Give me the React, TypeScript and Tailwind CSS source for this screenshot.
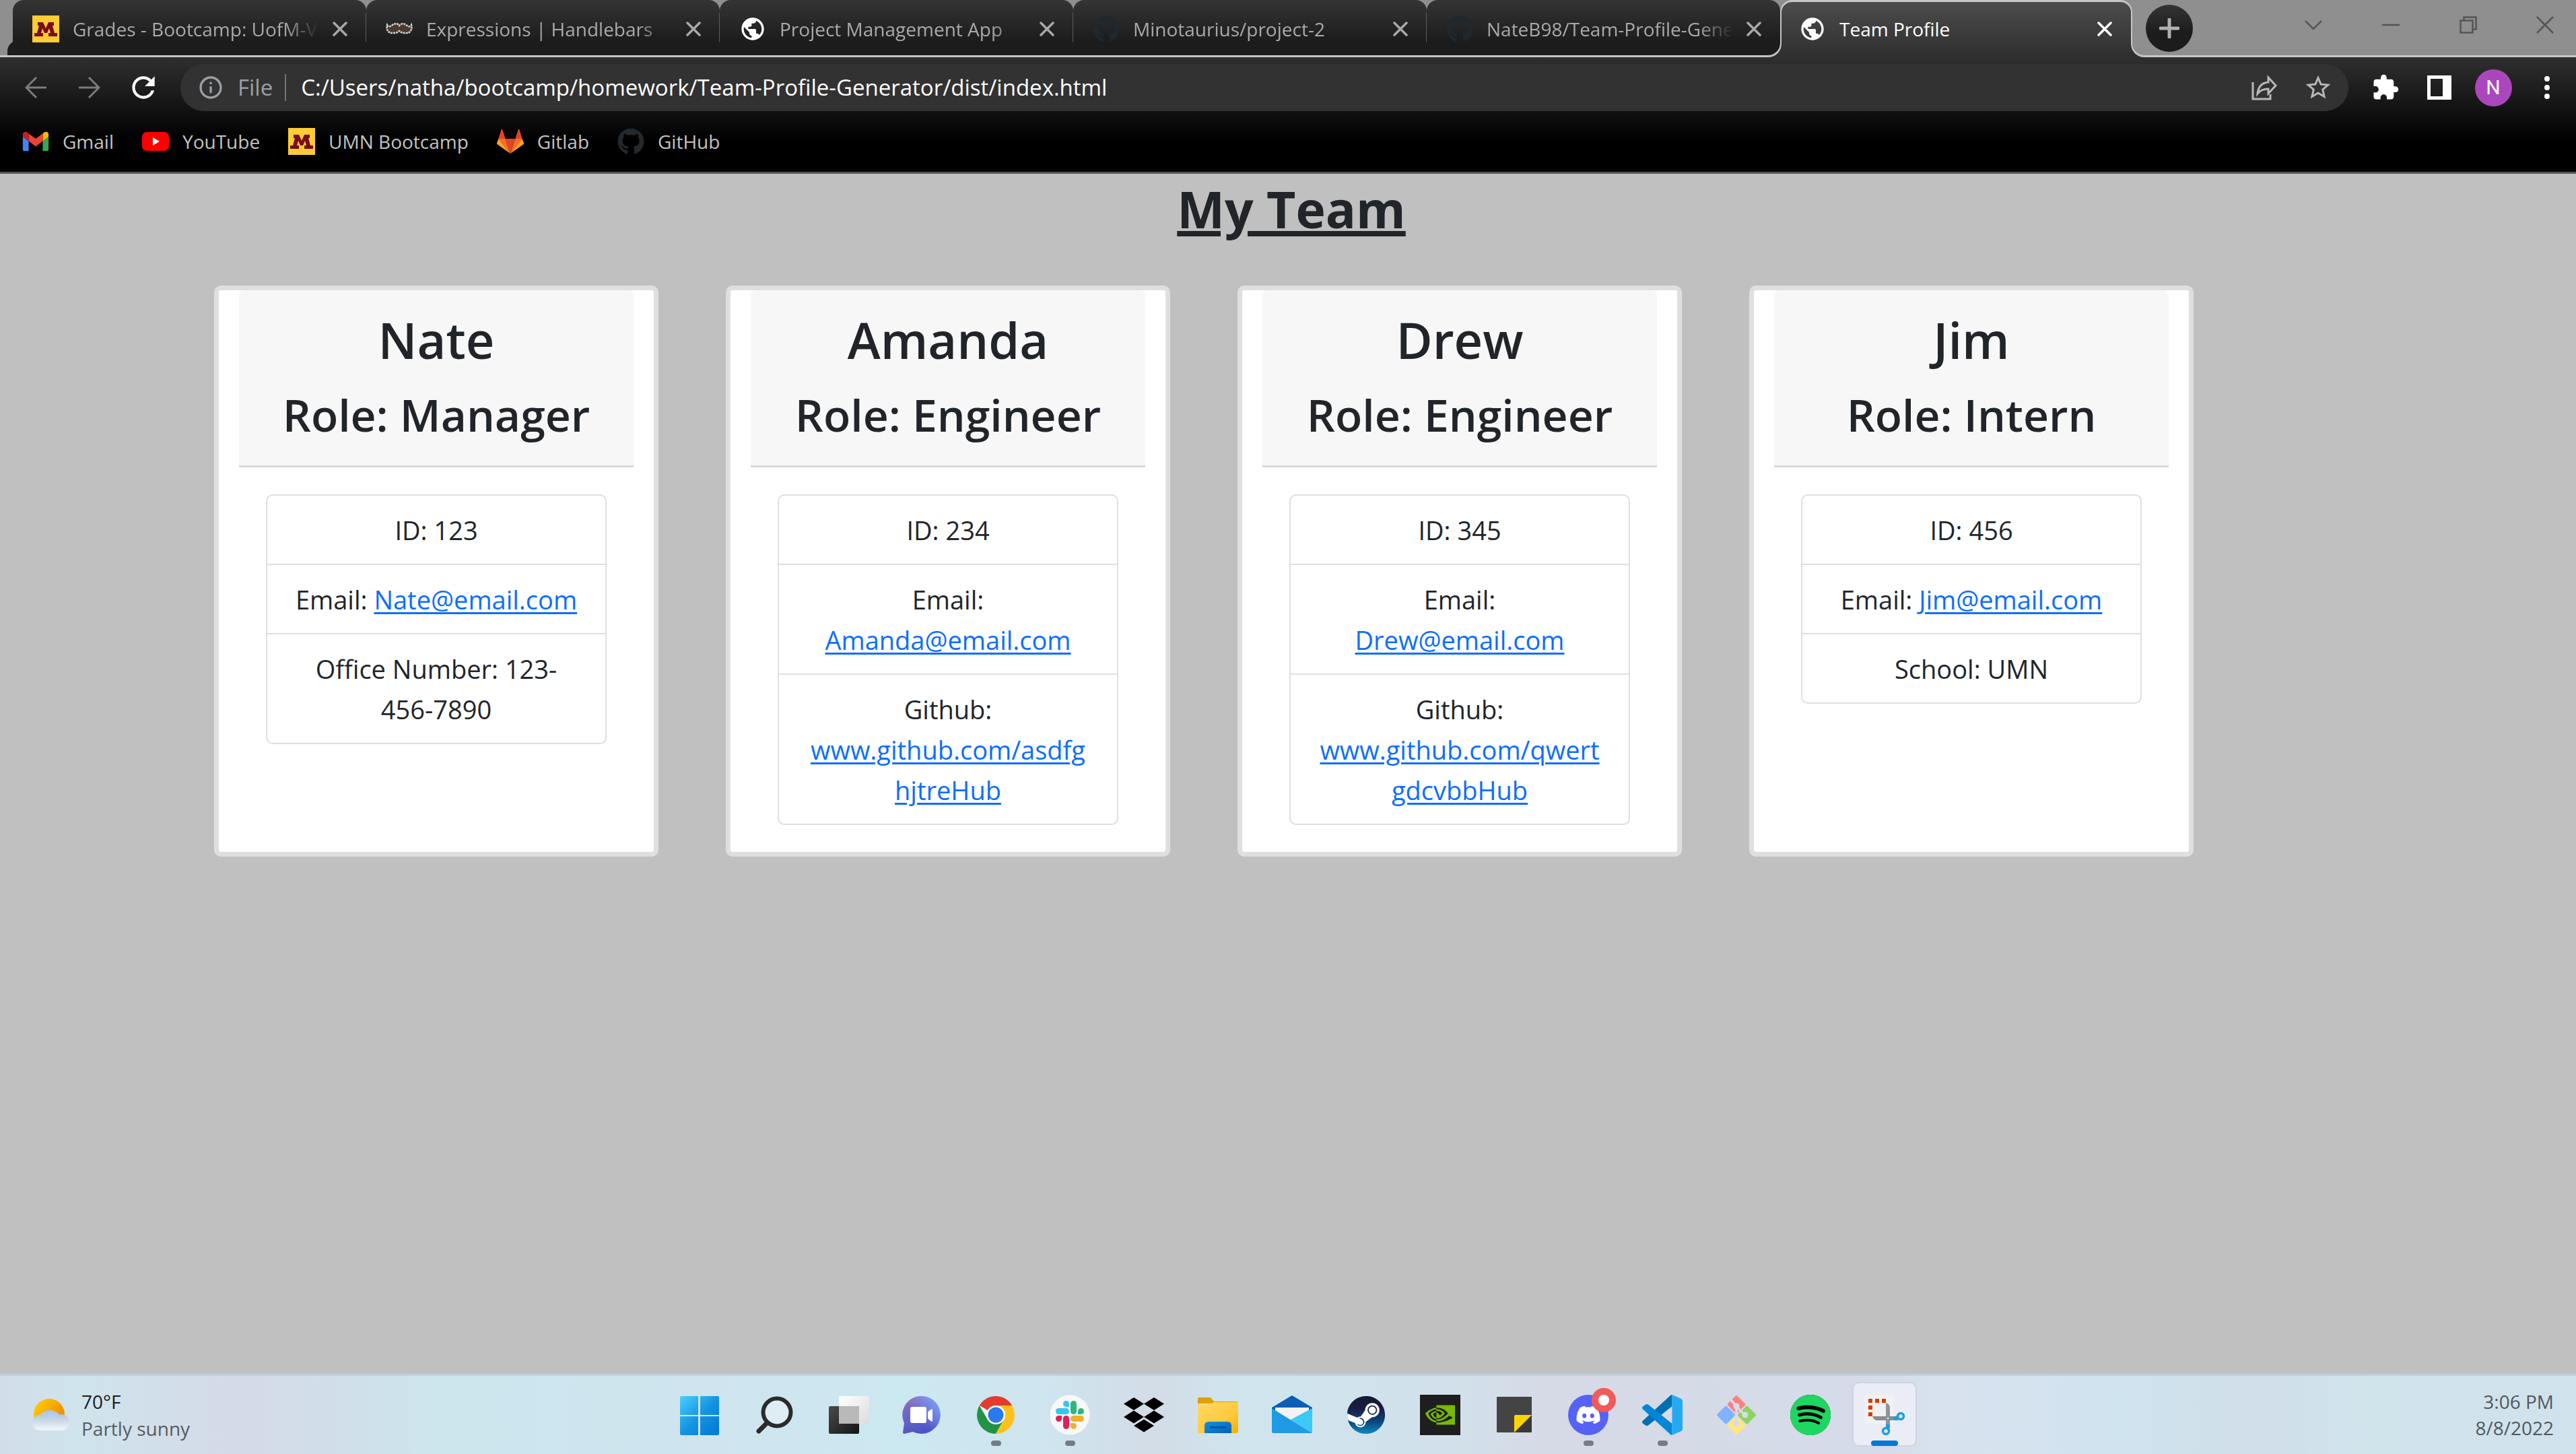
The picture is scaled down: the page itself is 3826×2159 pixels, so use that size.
import type { ReactNode } from 'react';
import { FaDiscord, FaGithub, FaSpotify, FaSteam } from 'react-icons/fa';
import { MdExtension, MdInfoOutline, MdPublic, MdRefresh, MdStarBorder } from 'react-icons/md';
import { SiNvidia } from 'react-icons/si';

/* ---------- small icons used in the browser chrome ---------- */

function MinnesotaIcon() {
  return (
    <svg viewBox="0 0 40 40" className="size-10 shrink-0" aria-hidden="true">
      <rect width="40" height="40" fill="#ffcc33" />
      <path
        d="M8 10h8l4 9 4-9h8v5h-2l3 11h4v5H24v-5h3l-2-7-3 7h-4l-3-7-2 7h3v5H3v-5h4l3-11H8z"
        fill="#7a0c1c"
      />
    </svg>
  );
}

function MoustacheIcon() {
  return (
    <svg viewBox="0 0 40 40" className="size-10 shrink-0" aria-hidden="true">
      <path
        d="M2 14c2 4 5 2 8 0 4-3 8-2 10 1 2-3 6-4 10-1 3 2 6 4 8 0 2 7-2 13-9 12-4 0-7-1-9-3-2 2-5 3-9 3-7 1-11-5-9-12z"
        fill="#4a3a30"
        stroke="#d4d4d4"
        strokeWidth="2.5"
        strokeDasharray="3 1"
      />
    </svg>
  );
}

function GmailIcon() {
  return (
    <svg viewBox="50 31 92 88" className="size-10 shrink-0" aria-hidden="true">
      <path fill="#4285f4" d="M58 108h14V74L52 59v43c0 3.32 2.69 6 6 6" />
      <path fill="#34a853" d="M120 108h14c3.32 0 6-2.69 6-6V59l-20 15" />
      <path fill="#fbbc04" d="M120 48v26l20-15v-8c0-7.42-8.47-11.65-14.4-7.2" />
      <path fill="#ea4335" d="M72 74V48l24 18 24-18v26L96 92" />
      <path fill="#c5221f" d="M52 51v8l20 15V48l-5.6-4.2c-5.94-4.45-14.4-.22-14.4 7.2" />
    </svg>
  );
}

function YouTubeIcon() {
  return (
    <svg viewBox="0 0 40 40" className="size-10 shrink-0" aria-hidden="true">
      <rect x="0" y="6" width="40" height="28" rx="7" fill="#ff0000" />
      <path d="M16 14l10 6-10 6z" fill="#fff" />
    </svg>
  );
}

function GitlabIcon() {
  return (
    <svg viewBox="0 0 40 40" className="size-10 shrink-0" aria-hidden="true">
      <path d="M20 38L27.4 16H12.6z" fill="#e24329" />
      <path d="M20 38L12.6 16H2.3zM20 38L27.4 16h10.3z" fill="#fc6d26" />
      <path d="M2.3 16L0 22.5c-.2.7 0 1.4.6 1.8L20 38zM37.7 16l2.3 6.5c.2.7 0 1.4-.6 1.8L20 38z" fill="#fca326" />
      <path d="M2.3 16h10.3L8.2 2c-.3-.7-1.2-.7-1.5 0zM37.7 16H27.4L31.8 2c.3-.7 1.2-.7 1.5 0z" fill="#e24329" />
    </svg>
  );
}

function CloseIcon() {
  return (
    <svg viewBox="0 0 22 22" className="size-[22px]" fill="none" stroke="currentColor" strokeWidth="3.5" strokeLinecap="round" aria-hidden="true">
      <path d="M2 2l18 18M20 2L2 20" />
    </svg>
  );
}

function ArrowIcon({ forward = false }: { forward?: boolean }) {
  return (
    <svg viewBox="0 0 32 32" className="size-8" fill="none" stroke="#7c7c7c" strokeWidth="3" aria-hidden="true">
      {forward ? <path d="M0 16h30M15 1l15 15-15 15" /> : <path d="M32 16H2M17 1L2 16l15 15" />}
    </svg>
  );
}

function ShareIcon() {
  return (
    <svg viewBox="0 0 40 40" className="size-10" fill="none" stroke="#b8b8b8" strokeWidth="3" aria-hidden="true">
      <path d="M3 12v25h26v-7" />
      <path d="M26 5l11 12-11 12v-7c-7 0-12 2-16 7 1-10 6-16 16-17z" strokeLinejoin="miter" />
    </svg>
  );
}

function SidePanelIcon() {
  return (
    <svg viewBox="0 0 36 36" className="size-9" aria-hidden="true">
      <path d="M0 0h36v36H0zM5 5v26h18V5z" fill="#fff" fillRule="evenodd" />
    </svg>
  );
}

/* ---------- taskbar icons ---------- */

function TaskSvg({ children }: { children: ReactNode }) {
  return (
    <svg viewBox="0 0 60 60" className="size-[60px] overflow-visible" aria-hidden="true">
      {children}
    </svg>
  );
}

function StartIcon() {
  return (
    <TaskSvg>
      <defs>
        <linearGradient id="start" x1="0" y1="0" x2="1" y2="1">
          <stop offset="0" stopColor="#4cd0ff" />
          <stop offset="0.5" stopColor="#1594e0" />
          <stop offset="1" stopColor="#0078d4" />
        </linearGradient>
      </defs>
      <path
        d="M3 2h25v28H1V4q0-2 2-2zM31 2h26q2 0 2 2v26H31zM1 32h27v28H3q-2 0-2-2zM31 32h28v26q0 2-2 2H31z"
        fill="url(#start)"
      />
    </TaskSvg>
  );
}

function SearchIcon() {
  return (
    <TaskSvg>
      <g fill="none" stroke="#2b2b2a" strokeLinecap="round">
        <circle cx="35" cy="26" r="20.5" strokeWidth="6" fill="#ffffff55" />
        <path d="M20 42L8 54" strokeWidth="7" />
      </g>
    </TaskSvg>
  );
}

function TaskViewIcon() {
  return (
    <TaskSvg>
      <defs>
        <linearGradient id="tvDark" x1="0" y1="0" x2="1" y2="1">
          <stop offset="0" stopColor="#4a4a4a" />
          <stop offset="1" stopColor="#151515" />
        </linearGradient>
        <linearGradient id="tvLight" x1="0" y1="0" x2="1" y2="1">
          <stop offset="0" stopColor="#ffffff" />
          <stop offset="1" stopColor="#dcdcdc" />
        </linearGradient>
      </defs>
      <rect x="17" y="2" width="45" height="41" rx="2" fill="url(#tvLight)" />
      <rect x="2" y="17" width="45" height="41" rx="2" fill="url(#tvDark)" />
      <rect x="17" y="17" width="30" height="26" fill="#b9b9b9" />
    </TaskSvg>
  );
}

function ChatIcon() {
  return (
    <TaskSvg>
      <defs>
        <linearGradient id="chat" x1="0" y1="0" x2="0.4" y2="1">
          <stop offset="0" stopColor="#9a6cb4" />
          <stop offset="0.6" stopColor="#6264c7" />
          <stop offset="1" stopColor="#4f52c4" />
        </linearGradient>
        <linearGradient id="chatGlow" x1="0.4" y1="0.6" x2="1" y2="0.1">
          <stop offset="0" stopColor="#7b9cf5" stopOpacity="0" />
          <stop offset="1" stopColor="#7fa6fb" />
        </linearGradient>
      </defs>
      <path d="M30 2a28 28 0 1 1-13 53L4 58q-2 0-2-2l2-14A28 28 0 0 1 30 2z" fill="url(#chat)" />
      <circle cx="30" cy="30" r="28" fill="url(#chatGlow)" />
      <rect x="13" y="18" width="24" height="24" rx="3" fill="#fff" />
      <path d="M46 21v19q-7-3-7-6v-7q0-3 7-6z" fill="#fff" />
    </TaskSvg>
  );
}

function ChromeIcon() {
  return (
    <TaskSvg>
      <circle cx="30" cy="30" r="28" fill="#fff" />
      <path d="M30 30L5.75 16A28 28 0 0 1 54.25 16z" fill="#e33b2e" />
      <path d="M5.75 16A28 28 0 0 0 30 58L42.1 37 30 30 17.9 37z" fill="#229342" />
      <path d="M54.25 16H30v14l12.1 7L30 58A28 28 0 0 0 54.25 16z" fill="#fcc21b" />
      <circle cx="30" cy="30" r="14" fill="#fff" />
      <circle cx="30" cy="30" r="11.5" fill="#2b79ee" />
    </TaskSvg>
  );
}

function SlackIcon() {
  return (
    <TaskSvg>
      <circle cx="30" cy="30" r="29.5" fill="#f8f8f8" />
      <g transform="translate(9 9)">
        <rect x="0" y="11" width="20" height="9" rx="4.5" fill="#36c5f0" />
        <path d="M20 9h-4.5a4.5 4.5 0 1 1 4.5-4.5z" fill="#36c5f0" />
        <rect x="22" y="0" width="9" height="20" rx="4.5" fill="#2eb67d" />
        <path d="M33 20v-4.5a4.5 4.5 0 1 1 4.5 4.5z" fill="#2eb67d" />
        <rect x="22" y="22" width="20" height="9" rx="4.5" fill="#ecb22e" />
        <path d="M22 33h4.5a4.5 4.5 0 1 1-4.5 4.5z" fill="#ecb22e" />
        <rect x="11" y="22" width="9" height="20" rx="4.5" fill="#e01e5a" />
        <path d="M9 22v4.5A4.5 4.5 0 1 1 4.5 22z" fill="#e01e5a" />
      </g>
    </TaskSvg>
  );
}

function DropboxIcon() {
  return (
    <TaskSvg>
      <path
        d="M15 4l15 9.5L15 23 0 13.5zM45 4l15 9.5L45 23 30 13.5zM15 23.500L30 33l-15 9.500L0 33zM45 23.500L60 33l-15 9.500L30 33zM30 36.500L45 46l-15 9.500L15 46z"
        fill="#000"
      />
    </TaskSvg>
  );
}

function FolderIcon() {
  return (
    <TaskSvg>
      <defs>
        <linearGradient id="folder" x1="0" y1="0" x2="1" y2="1">
          <stop offset="0" stopColor="#ffd96a" />
          <stop offset="0.6" stopColor="#ffca3c" />
          <stop offset="1" stopColor="#f5b100" />
        </linearGradient>
        <linearGradient id="folderClip" x1="0" y1="0" x2="1" y2="1">
          <stop offset="0" stopColor="#1590e0" />
          <stop offset="1" stopColor="#0561b8" />
        </linearGradient>
      </defs>
      <path d="M2 4h17l5 6h34q2 0 2 3H0V6q0-2 2-2z" fill="#dfa000" />
      <path d="M0 14h18q2 0 4-2l2-1h36v44q0 2-2 2H2q-2 0-2-2z" fill="url(#folder)" />
      <path d="M10 57V46q0-6 6-6h28q6 0 6 6v11z" fill="url(#folderClip)" />
      <path d="M18 48.5h24" stroke="#0b4f93" strokeWidth="2.5" />
    </TaskSvg>
  );
}

function MailIcon() {
  return (
    <TaskSvg>
      <path d="M30 1l30 18v8H0v-8z" fill="#0a5fb4" />
      <path d="M5 19h50v6L30 42 5 25z" fill="#f3f3f3" />
      <path d="M60 20v37L28 37z" fill="#3bcaf5" />
      <path d="M0 20l60 37H2q-2 0-2-2z" fill="#1e9be4" />
    </TaskSvg>
  );
}

function SteamIcon() {
  return (
    <span className="relative block size-[60px]">
      <svg viewBox="0 0 60 60" className="absolute inset-0" aria-hidden="true">
        <defs>
          <linearGradient id="steam" x1="0" y1="0" x2="0" y2="1">
            <stop offset="0" stopColor="#111a2e" />
            <stop offset="0.35" stopColor="#1b1c46" />
            <stop offset="0.7" stopColor="#0d4a80" />
            <stop offset="1" stopColor="#0f8ac0" />
          </linearGradient>
        </defs>
        <circle cx="30" cy="30" r="27" fill="#fff" />
      </svg>
      <FaSteam className="absolute inset-[1px] size-[58px]" fill="url(#steam)" aria-hidden="true" />
    </span>
  );
}

function NvidiaIcon() {
  return (
    <span className="flex size-[60px] items-center justify-center bg-[#1e1e1e] text-[#76b900]">
      <SiNvidia className="size-11" aria-hidden="true" />
    </span>
  );
}

function StickyNotesIcon() {
  return (
    <TaskSvg>
      <path d="M5 3h50q1 0 1 1v26L30 56H5q-1 0-1-1V4q0-1 1-1z" fill="#444" />
      <path d="M56 30v25q0 1-1 1H30z" fill="#383838" />
      <path d="M32 30h24L30 56V32q0-2 2-2z" fill="#ffd500" />
    </TaskSvg>
  );
}

function DiscordIcon() {
  return (
    <span className="relative flex size-[60px] items-center justify-center rounded-full bg-[#5662f6] text-white">
      <FaDiscord className="size-[38px]" aria-hidden="true" />
      <span className="absolute -right-[11px] -top-[10px] flex size-9 items-center justify-center rounded-full bg-[#f05a5b]">
        <span className="size-4 rounded-full bg-white" />
      </span>
    </span>
  );
}

function VsCodeIcon() {
  return (
    <TaskSvg>
      <path d="M44.5 0v17L9 45.5q-2 1-4 0l-4-3q-2-2 0-4L42 1q1-1 2.5-1z" fill="#0070b4" />
      <path d="M44.5 60V43L9 14.5q-2-1-4 0l-4 3q-2 2 0 4L42 59q1 1 2.5 1z" fill="#0187d6" />
      <path d="M44.5 0L58 6q2 1 2 3.5v41q0 2.5-2 3.5l-13.5 6z" fill="#25a9f1" />
    </TaskSvg>
  );
}

function GitIcon() {
  return (
    <TaskSvg>
      <g transform="rotate(45 30 30)">
        <rect x="9" y="9" width="20" height="20" rx="2" fill="#ff8080" />
        <rect x="31" y="9" width="20" height="20" rx="2" fill="#8dd35f" />
        <rect x="9" y="31" width="20" height="20" rx="2" fill="#80b3ff" />
        <rect x="31" y="31" width="20" height="20" rx="2" fill="#ffe680" />
      </g>
      <g stroke="#d6dce8" strokeWidth="3.5" fill="none">
        <path d="M22 8l8 9v26M30 17l12 13" />
      </g>
      <g fill="#d6dce8">
        <circle cx="30" cy="17" r="4.5" />
        <circle cx="43" cy="30" r="4.5" />
        <circle cx="30" cy="43" r="4.5" />
      </g>
    </TaskSvg>
  );
}

function SpotifyIcon() {
  return (
    <span className="flex size-[60px] items-center justify-center rounded-full bg-black text-[#1ed760]">
      <FaSpotify className="size-[62px] shrink-0" aria-hidden="true" />
    </span>
  );
}

function SnipIcon() {
  return (
    <TaskSvg>
      <rect x="0" y="0" width="44" height="44" rx="4" fill="#f1f1f1" />
      <path d="M6 6h6v6H6zM16 6h6v6h-6zM26 6h6v6h-6zM6 16h6v6H6zM6 26h6v6H6z" fill="#d83b01" />
      <path d="M32 12q6 2 6 7v25h-6z" fill="#8d949a" />
      <path d="M12 32h32v6H19q-5 0-7-6z" fill="#868d93" />
      <circle cx="35" cy="35" r="1.5" fill="#ddd" />
      <path d="M32 44h6v6h-6zM44 32h6v6h-6z" fill="#1b9de2" />
      <g fill="none" stroke="#1b9de2" strokeWidth="3.5">
        <circle cx="32" cy="54" r="4.5" />
        <circle cx="54" cy="32" r="4.5" />
      </g>
    </TaskSvg>
  );
}

function WeatherIcon() {
  return (
    <svg viewBox="0 0 56 48" className="h-12 w-14 shrink-0" aria-hidden="true">
      <defs>
        <linearGradient id="sun" x1="0" y1="0" x2="1" y2="0.7">
          <stop offset="0" stopColor="#ffd400" />
          <stop offset="1" stopColor="#f08300" />
        </linearGradient>
        <linearGradient id="cloudBack" x1="0" y1="0" x2="0" y2="1">
          <stop offset="0" stopColor="#a9c3ea" />
          <stop offset="1" stopColor="#e0eafa" />
        </linearGradient>
        <linearGradient id="cloudFront" x1="0" y1="0" x2="0" y2="1">
          <stop offset="0" stopColor="#b4c6da" />
          <stop offset="1" stopColor="#f2f6fb" />
        </linearGradient>
      </defs>
      <circle cx="25" cy="23" r="23" fill="url(#sun)" />
      <path d="M8 34a18 18 0 0 1 35-5v16H8z" fill="url(#cloudBack)" />
      <path d="M12 47a11 11 0 0 1-12-11 12 12 0 0 1 24-1l7-1a12 12 0 1 1 12 13z" fill="url(#cloudFront)" />
    </svg>
  );
}

/* ---------- data ---------- */

const tabs: { title: string; icon: ReactNode }[] = [
  { title: 'Grades - Bootcamp: UofM-VIRT', icon: <MinnesotaIcon /> },
  { title: 'Expressions | Handlebars', icon: <MoustacheIcon /> },
  { title: 'Project Management App', icon: <MdPublic className="size-10 shrink-0 text-white" /> },
  { title: 'Minotaurius/project-2', icon: <FaGithub className="size-10 shrink-0 text-[#20272d]" /> },
  { title: 'NateB98/Team-Profile-Generator', icon: <FaGithub className="size-10 shrink-0 text-[#20272d]" /> },
];

const bookmarks: { label: string; icon: ReactNode }[] = [
  { label: 'Gmail', icon: <GmailIcon /> },
  { label: 'YouTube', icon: <YouTubeIcon /> },
  { label: 'UMN Bootcamp', icon: <MinnesotaIcon /> },
  { label: 'Gitlab', icon: <GitlabIcon /> },
  { label: 'GitHub', icon: <FaGithub className="size-10 shrink-0 text-[#24292e]" /> },
];

type Detail = { label: string; text: string; href?: string };

const team: { name: string; role: string; details: Detail[] }[] = [
  {
    name: 'Nate',
    role: 'Manager',
    details: [
      { label: 'ID', text: '123' },
      { label: 'Email', text: 'Nate@email.com', href: 'mailto:Nate@email.com' },
      { label: 'Office Number', text: '123-456-7890' },
    ],
  },
  {
    name: 'Amanda',
    role: 'Engineer',
    details: [
      { label: 'ID', text: '234' },
      { label: 'Email', text: 'Amanda@email.com', href: 'mailto:Amanda@email.com' },
      { label: 'Github', text: 'www.github.com/asdfghjtreHub', href: '#asdfghjtreHub' },
    ],
  },
  {
    name: 'Drew',
    role: 'Engineer',
    details: [
      { label: 'ID', text: '345' },
      { label: 'Email', text: 'Drew@email.com', href: 'mailto:Drew@email.com' },
      { label: 'Github', text: 'www.github.com/qwertgdcvbbHub', href: '#qwertgdcvbbHub' },
    ],
  },
  {
    name: 'Jim',
    role: 'Intern',
    details: [
      { label: 'ID', text: '456' },
      { label: 'Email', text: 'Jim@email.com', href: 'mailto:Jim@email.com' },
      { label: 'School', text: 'UMN' },
    ],
  },
];

const apps: { name: string; icon: ReactNode; state?: 'open' | 'active' }[] = [
  { name: 'Start', icon: <StartIcon /> },
  { name: 'Search', icon: <SearchIcon /> },
  { name: 'Task view', icon: <TaskViewIcon /> },
  { name: 'Chat', icon: <ChatIcon /> },
  { name: 'Chrome', icon: <ChromeIcon />, state: 'open' },
  { name: 'Slack', icon: <SlackIcon />, state: 'open' },
  { name: 'Dropbox', icon: <DropboxIcon /> },
  { name: 'File Explorer', icon: <FolderIcon /> },
  { name: 'Mail', icon: <MailIcon /> },
  { name: 'Steam', icon: <SteamIcon /> },
  { name: 'Nvidia', icon: <NvidiaIcon /> },
  { name: 'Sticky Notes', icon: <StickyNotesIcon /> },
  { name: 'Discord', icon: <DiscordIcon />, state: 'open' },
  { name: 'Visual Studio Code', icon: <VsCodeIcon />, state: 'open' },
  { name: 'Git', icon: <GitIcon /> },
  { name: 'Spotify', icon: <SpotifyIcon /> },
  { name: 'Snipping Tool', icon: <SnipIcon />, state: 'active' },
];

/* ---------- browser chrome ---------- */

function TabStrip() {
  return (
    <div className="flex h-[85px] bg-[linear-gradient(#4c4c4c,#2f2f2f)]">
      <div className="flex min-w-0 max-w-[2646px] flex-[5] overflow-hidden rounded-br-[20px] border-b-[3px] border-r-2 border-[#c6c6c6] bg-[#8f8f8f] pl-[19px]">
        {tabs.map((tab) => (
          <div
            key={tab.title}
            className="group relative flex min-w-0 flex-1 items-center rounded-t-[16px] bg-[linear-gradient(#343434,#1c1c1c_75%)] pl-[29px] pr-[28px] pt-[3px] text-[#a9a9a9] shadow-[-8px_60px_0_0_#1c1c1c] last:rounded-br-[18px]"
          >
            {tab.icon}
            <span className="ml-5 min-w-0 flex-1 overflow-hidden whitespace-nowrap text-[28px] leading-[40px] [mask-image:linear-gradient(to_right,#000_86%,transparent)]">
              {tab.title}
            </span>
            <button type="button" aria-label={`Close ${tab.title}`} className="ml-5 shrink-0">
              <CloseIcon />
            </button>
            <span className="absolute -right-px top-[19px] h-[50px] w-[2px] bg-[#5c5c5c] group-last:hidden" />
          </div>
        ))}
      </div>
      <div className="relative z-10 -mx-[2px] min-w-0 max-w-[523px] flex-1 bg-[linear-gradient(#8f8f8f_20px,transparent_20px)]">
        <div className="flex h-[60px] items-center rounded-t-[18px] border-x-2 border-t-[3px] border-[#c6c6c6] bg-[linear-gradient(#4c4c4c,#2f2f2f_82px)] pl-[26px] pr-[28px] text-white">
          <span className="mt-[22px] flex min-w-0 flex-1 items-center">
            <MdPublic className="size-10 shrink-0" />
            <span className="ml-5 min-w-0 flex-1 truncate text-[28px] leading-[40px]">Team Profile</span>
            <button type="button" aria-label="Close Team Profile">
              <CloseIcon />
            </button>
          </span>
        </div>
      </div>
      <div className="flex min-w-0 flex-1 items-start justify-between rounded-bl-[20px] border-b-[3px] border-l-2 border-[#c6c6c6] bg-[#8f8f8f] pl-5">
        <button
          type="button"
          aria-label="New tab"
          className="mt-[7px] flex size-[70px] shrink-0 items-center justify-center rounded-full bg-[linear-gradient(#343434,#1c1c1c_60%)]"
        >
          <svg viewBox="0 0 30 30" className="size-[30px]" stroke="#b0b0b0" strokeWidth="5" strokeLinecap="round" aria-hidden="true">
            <path d="M15 2v26M2 15h26" />
          </svg>
        </button>
        <div className="flex h-[73px] text-[#555] [&_svg]:size-[26px]">
          <button type="button" aria-label="Search tabs" className="flex w-[115px] items-center justify-center">
            <svg viewBox="0 0 26 26" fill="none" stroke="currentColor" strokeWidth="2.5">
              <path d="M1 7l12 12L25 7" />
            </svg>
          </button>
          <button type="button" aria-label="Minimize" className="flex w-[115px] items-center justify-center">
            <svg viewBox="0 0 26 26" fill="none" stroke="currentColor" strokeWidth="2.5">
              <path d="M0 13h26" />
            </svg>
          </button>
          <button type="button" aria-label="Restore" className="flex w-[115px] items-center justify-center">
            <svg viewBox="0 0 26 26" fill="none" stroke="currentColor" strokeWidth="2.5">
              <path d="M1.5 6.5h18v18h-18zM6.5 6V1.5h18v18H20" />
            </svg>
          </button>
          <button type="button" aria-label="Close window" className="flex w-[103px] items-center justify-center pl-[11px]">
            <svg viewBox="0 0 26 26" fill="none" stroke="currentColor" strokeWidth="2.5">
              <path d="M1 1l24 24M25 1L1 25" />
            </svg>
          </button>
        </div>
      </div>
    </div>
  );
}

function Toolbar() {
  return (
    <div className="border-b-[3px] border-[#555] bg-[linear-gradient(#2f2f2f,#111_80px,#000_125px)]">
      <div className="flex items-center py-[10px] pl-[13px] pr-[3px] [&_button]:flex [&_button]:w-20 [&_button]:shrink-0 [&_button]:items-center [&_button]:justify-center">
        <button type="button" aria-label="Back">
          <ArrowIcon />
        </button>
        <button type="button" aria-label="Forward">
          <ArrowIcon forward />
        </button>
        <button type="button" aria-label="Reload">
          <MdRefresh className="size-[50px] text-white" />
        </button>
        <div className="mx-[15px] flex h-[70px] min-w-0 flex-1 items-center rounded-full bg-[#323232] pl-[25px] pr-[5px] text-[33px] leading-[50px]">
          <MdInfoOutline className="size-10 shrink-0 text-[#9aa0a6]" />
          <label htmlFor="address" className="ml-5 border-r-2 border-[#757575] pr-[18px] leading-[40px] text-[#9aa0a6]">
            File
          </label>
          <input
            id="address"
            type="text"
            className="min-w-0 flex-1 bg-transparent pl-[22px] text-white outline-none"
            defaultValue="C:/Users/natha/bootcamp/homework/Team-Profile-Generator/dist/index.html"
          />
          <button type="button" aria-label="Share">
            <ShareIcon />
          </button>
          <button type="button" aria-label="Bookmark">
            <MdStarBorder className="size-[44px] text-[#b8b8b8]" />
          </button>
        </div>
        <button type="button" aria-label="Extensions">
          <MdExtension className="size-[42px] text-white" />
        </button>
        <button type="button" aria-label="Side panel">
          <SidePanelIcon />
        </button>
        <button type="button" aria-label="Profile">
          <span className="flex size-[55px] items-center justify-center rounded-full bg-[#ab47bc] font-[Roboto,sans-serif] text-[30px] leading-none text-white">
            N
          </span>
        </button>
        <button type="button" aria-label="Menu">
          <svg viewBox="0 0 8 34" className="h-[34px] w-2" fill="#fff" aria-hidden="true">
            <circle cx="4" cy="4" r="4" />
            <circle cx="4" cy="17" r="4" />
            <circle cx="4" cy="30" r="4" />
          </svg>
        </button>
      </div>
      <nav className="flex gap-[42px] pb-[25px] pl-[33px] pt-[15px]">
        {bookmarks.map((bookmark) => (
          <a key={bookmark.label} href={`#${bookmark.label}`} className="flex items-center gap-5 text-[28px] leading-[40px] text-[#c3c3c3]">
            {bookmark.icon}
            {bookmark.label}
          </a>
        ))}
      </nav>
    </div>
  );
}

/* ---------- page ---------- */

function TeamCard({ name, role, details }: (typeof team)[number]) {
  return (
    <article className="rounded-[10px] border-[7px] border-[#dfdfdf] bg-white px-[30px] text-center">
      <header className="rounded-t-[8px] border-b-[3px] border-[#d8d8d8] bg-[#f7f7f7] px-4 pb-[34px] pt-[26px] font-semibold">
        <h2 className="text-[74px] leading-[96px]">{name}</h2>
        <h3 className="mt-5 text-[66px] leading-[84px]">Role: {role}</h3>
      </header>
      <div className="p-10">
        <ul className="divide-y-2 divide-[#dfdfdf] rounded-[10px] border-2 border-[#dfdfdf] text-[38px] leading-[60px]">
          {details.map((detail) => (
            <li key={detail.label} className="break-words px-[38px] pb-5 pt-[21px]">
              {detail.label}:{' '}
              {detail.href ? (
                <a href={detail.href} className="text-[#0d6efd] underline decoration-[3px] underline-offset-[4px]">
                  {detail.text}
                </a>
              ) : (
                detail.text
              )}
            </li>
          ))}
        </ul>
      </div>
    </article>
  );
}

function Taskbar() {
  return (
    <footer className="grid grid-cols-[1fr_auto_1fr] items-center border-t-[3px] border-[#c3d0dc] bg-[linear-gradient(to_right,#d3dde9,#cfe4ec_3%,#d5dae8_9%,#d0e0ea_14%,#cce6ee_17%,#cfe4ee_28%,#cce8f0_35%,#cfe4ee_41%,#d3dce7_45%,#cfe5ee_48%,#d2e0ea_57%,#d6dae7_60%,#d5dbe8_72%,#d8e2ef_76%,#cfe3ee_82%,#d1dfea_88%,#d0e4ec_92%,#d0e2ec)]">
      <button type="button" className="flex items-center gap-[17px] pl-12 text-left text-[28px] leading-[40px]">
        <WeatherIcon />
        <span>
          <span className="block text-[#1b1b1b]">70°F</span>
          <span className="block text-[#565c61]">Partly sunny</span>
        </span>
      </button>
      <div className="flex pl-[12px]">
        {apps.map((app) => (
          <button key={app.name} type="button" aria-label={app.name} className="relative flex h-[116px] w-[110px] items-center justify-center pb-px">
            {app.state === 'active' && (
              <span className="absolute left-[7px] top-[9px] size-[96px] rounded-[10px] border-2 border-[#cdd3df] bg-[#eaedf5]" />
            )}
            <span className="relative">{app.icon}</span>
            {app.state === 'open' && <span className="absolute bottom-3 left-[48px] h-2 w-[15px] rounded-full bg-[#757c85]" />}
            {app.state === 'active' && <span className="absolute bottom-3 left-[35px] h-2 w-10 rounded-full bg-[#0078d7]" />}
          </button>
        ))}
      </div>
      <button type="button" className="justify-self-end pr-[33px] text-right text-[28px] leading-[39px] text-[#50585c]">
        <span className="block">3:06 PM</span>
        <span className="block">8/8/2022</span>
      </button>
    </footer>
  );
}

export default function App() {
  return (
    <div className="flex min-h-screen flex-col bg-[#c0c0c0] font-['Open_Sans',sans-serif] text-[#212529]">
      <TabStrip />
      <Toolbar />
      <main className="flex-1">
        <h1 className="pl-[10px] pt-1 text-center text-[75px] font-bold leading-[96px] underline decoration-[8px] underline-offset-[4px]">
          My Team
        </h1>
        <section className="mt-[66px] grid grid-cols-4 gap-[100px] pl-[318px] pr-[568px]">
          {team.map((member) => (
            <TeamCard key={member.name} {...member} />
          ))}
        </section>
      </main>
      <Taskbar />
    </div>
  );
}
